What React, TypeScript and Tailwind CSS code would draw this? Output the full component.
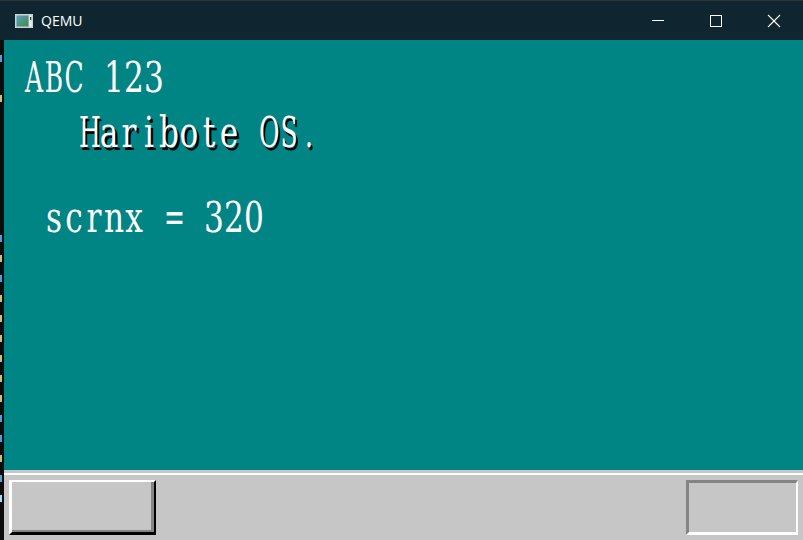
import React from "react";

const osFont = { fontFamily: '"DejaVu Serif", "Liberation Serif", serif' };

function Strip() {
  const marks = [
    "#569cd6", "", "#d7ba7d", "", "", "", "", "", "", "#569cd6", "#d7ba7d", "#569cd6", "#d7ba7d",
    "#d7ba7d", "#d7ba7d", "#d7ba7d", "#d7ba7d", "#d7ba7d", "#569cd6", "#569cd6", "#d7ba7d", "#569cd6", "#9cdcfe", "",
  ];
  return (
    <div className="w-[4px] shrink-0 bg-[#0c0c0c] flex flex-col pt-[8px]">
      {marks.map((c, i) => (
        <div key={i} className="h-[20px] flex items-center">
          {c ? <div className="w-[2px] h-[7px]" style={{ backgroundColor: c }} /> : null}
        </div>
      ))}
    </div>
  );
}

function OsLine({ text, ml, mt, shadow }: { text: string; ml: string; mt: string; shadow?: boolean }) {
  return (
    <div className={`${ml} ${mt} h-[40px] pt-[5px]`}>
      <div
        className={`flex text-[25px] leading-[40px] text-white scale-y-[1.74] origin-[0_28.7px] ${
          shadow ? "[text-shadow:2px_1.45px_0_#000]" : ""
        }`}
        style={osFont}
      >
        {text.split("").map((ch, i) => (
          <span
            key={i}
            className={`w-[20px] shrink-0 text-center whitespace-pre ${
              /[a-z0-9]/.test(ch) ? "scale-x-[1.25]" : ""
            }`}
          >
            {ch}
          </span>
        ))}
      </div>
    </div>
  );
}

export default function App() {
  return (
    <div className="w-[803px] h-[540px] flex flex-col overflow-hidden bg-[#0f2631]">
      {/* Title bar */}
      <div className="h-[40px] shrink-0 flex items-center border-t border-[#2f3436] bg-[#0f2631]">
        <div className="w-[15px] shrink-0" />
        <svg width="18" height="14" viewBox="0 0 18 14" className="shrink-0">
          <defs>
            <linearGradient id="g" x1="0" y1="0" x2="1" y2="1">
              <stop offset="0" stopColor="#5fa0c0" />
              <stop offset="1" stopColor="#3f8a4a" />
            </linearGradient>
          </defs>
          <rect x="0" y="0" width="18" height="14" fill="#c9d2d6" />
          <rect x="1.5" y="1.5" width="12" height="11" fill="url(#g)" />
          <rect x="14.5" y="1.5" width="2" height="11" fill="#f2f4f4" />
          <rect x="15" y="3" width="1.3" height="3" fill="#30484f" />
        </svg>
        <div
          className="ml-[8px] text-[14px] text-white leading-none"
          style={{ fontFamily: '"Open Sans", "Noto Sans", sans-serif' }}
        >
          QEMU
        </div>
        <div className="flex-1" />
        <div className="w-[58px] h-full flex items-center justify-center">
          <svg width="14" height="14" viewBox="0 0 14 14">
            <line x1="1" y1="6.5" x2="13" y2="6.5" stroke="#ffffff" strokeWidth="1" />
          </svg>
        </div>
        <div className="w-[58px] h-full flex items-center justify-center">
          <svg width="14" height="14" viewBox="0 0 14 14">
            <rect x="1.5" y="1.5" width="11" height="11" fill="none" stroke="#ffffff" strokeWidth="1" />
          </svg>
        </div>
        <div className="w-[58px] h-full flex items-center justify-center">
          <svg width="14" height="14" viewBox="0 0 14 14">
            <line x1="1" y1="1" x2="13" y2="13" stroke="#ffffff" strokeWidth="1.1" />
            <line x1="13" y1="1" x2="1" y2="13" stroke="#ffffff" strokeWidth="1.1" />
          </svg>
        </div>
      </div>

      {/* Body */}
      <div className="flex-1 flex">
        <Strip />
        <div className="flex-1 flex flex-col">
          {/* Teal screen */}
          <div className="h-[430px] bg-[#008484] flex flex-col">
            <OsLine text="ABC 123" ml="ml-[20px]" mt="mt-[20px]" />
            <OsLine text="Haribote OS." ml="ml-[75px]" mt="mt-[15px]" shadow />
            <OsLine text="scrnx = 320" ml="ml-[40px]" mt="mt-[45px]" />
          </div>
          {/* Task bar */}
          <div className="h-[3px] bg-[#c6c6c6]" />
          <div className="h-[2px] bg-white" />
          <div className="flex-1 bg-[#c6c6c6] flex justify-between items-start pl-[5px] pr-[5px] pt-[5px]">
            <div className="w-[147px] h-[55px] border-t-[2px] border-l-[3px] border-r-[2px] border-b-[3px] border-t-white border-l-white border-r-black border-b-black">
              <div className="w-full h-full border-r-[3px] border-b-[2px] border-[#848484]" />
            </div>
            <div className="w-[112px] h-[55px] border-t-[3px] border-l-[3px] border-b-[3px] border-r-[2px] border-t-[#848484] border-l-[#848484] border-b-white border-r-white" />
          </div>
        </div>
      </div>
    </div>
  );
}
